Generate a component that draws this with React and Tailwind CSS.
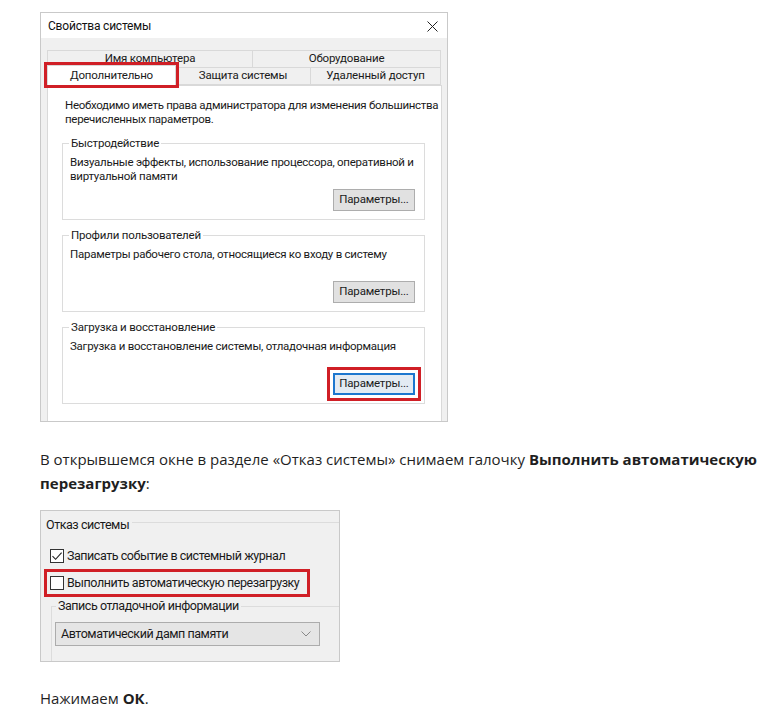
import React from 'react';

// Windows-style dialog pieces, shown as screenshots inside an article
const ui = { fontFamily: 'Roboto, "Liberation Sans", Arial, sans-serif' };
const article = { fontFamily: '"Open Sans", "Noto Sans", sans-serif' };

function WinButton({ focused, children }) {
  return (
    <div
      className={`flex items-center justify-center w-[82px] h-[22px] text-[11.5px] tracking-[-0.2px] text-[#1a1a1a] ${
        focused
          ? 'border-2 border-[#1c77cf] bg-[#e3ebf3] outline-[3px] outline-[#d01f26] outline-offset-[3px]'
          : 'border border-[#adadad] bg-[#e1e1e1]'
      }`}
    >
      {children}
    </div>
  );
}

function GroupBox({ title, text, focused, className = '' }) {
  return (
    <div className={`border border-[#dcdcdc] ml-[14px] mr-[16px] pb-[8px] ${className}`}>
      <div className="-mt-[8px] ml-[6px] px-[2px] w-fit bg-white leading-[14px] text-[11.5px] tracking-[-0.2px] text-[#1a1a1a]">
        {title}
      </div>
      <div className="h-[28px] mt-[5px] pl-[7px] leading-[14px] text-[11.5px] tracking-[-0.25px] text-[#1a1a1a]">
        {text}
      </div>
      <div className="flex justify-end mt-[6px] mr-[9px]">
        <WinButton focused={focused}>Параметры...</WinButton>
      </div>
    </div>
  );
}

function Tab({ w, children, selected }) {
  if (selected) {
    return (
      <div
        className={`${w} h-[20px] -mt-[2px] -mb-px relative z-10 flex items-center justify-center bg-white border border-b-0 border-[#d9d9d9] outline-[3px] outline-[#d01f26] text-[11.5px] tracking-[-0.2px] text-[#1a1a1a]`}
      >
        {children}
      </div>
    );
  }
  return (
    <div
      className={`${w} h-[18px] flex items-center justify-center bg-[#f0f0f0] border border-[#d9d9d9] -ml-px first:ml-0 text-[11.5px] tracking-[-0.2px] text-[#1a1a1a]`}
    >
      {children}
    </div>
  );
}

function SystemProperties() {
  return (
    <div className="w-[408px] h-[410px] border border-[#c9c9c9] bg-[#f0f0f0] overflow-hidden" style={ui}>
      <div className="h-[25px] bg-white flex items-center justify-between pl-[7px] pr-[9px]">
        <span className="text-[12px] tracking-[-0.2px] text-[#111]">Свойства системы</span>
        <svg width="11" height="11" viewBox="0 0 11 11" className="mt-[1px]">
          <path d="M0.5 0.5 L10.5 10.5 M10.5 0.5 L0.5 10.5" stroke="#222" strokeWidth="1" />
        </svg>
      </div>
      <div className="pl-[6px] pr-[6px] pt-[12px]">
        <div className="flex">
          <Tab w="w-[206px]">Имя компьютера</Tab>
          <Tab w="w-[189px]">Оборудование</Tab>
        </div>
        <div className="flex -mt-px">
          <Tab w="w-[129px]" selected>Дополнительно</Tab>
          <Tab w="w-[136px]">Защита системы</Tab>
          <Tab w="w-[131px]">Удаленный доступ</Tab>
        </div>
        <div className="w-[395px] h-[340px] bg-white border border-[#d9d9d9]">
          <div className="pl-[17px] pt-[12px] whitespace-nowrap leading-[14px] text-[11.5px] tracking-[-0.3px] text-[#1a1a1a]">
            Необходимо иметь права администратора для изменения большинства
            <br />
            перечисленных параметров.
          </div>
          <GroupBox
            className="mt-[17px]"
            title="Быстродействие"
            text="Визуальные эффекты, использование процессора, оперативной и виртуальной памяти"
          />
          <GroupBox
            className="mt-[15px]"
            title="Профили пользователей"
            text="Параметры рабочего стола, относящиеся ко входу в систему"
          />
          <GroupBox
            className="mt-[15px]"
            title="Загрузка и восстановление"
            text="Загрузка и восстановление системы, отладочная информация"
            focused
          />
        </div>
      </div>
    </div>
  );
}

function CheckRow({ checked, highlight, children }) {
  return (
    <div
      className={`flex items-center gap-[3px] w-fit ${
        highlight ? 'outline-[3px] outline-[#d01f26] outline-offset-[3px] pr-[5px]' : ''
      }`}
    >
      <div className="w-[14px] h-[14px] border border-[#333] bg-white flex items-center justify-center">
        {checked && (
          <svg width="12" height="12" viewBox="0 0 12 12">
            <path d="M1.5 6.2 L4.6 9.3 L10.6 2.6" fill="none" stroke="#222" strokeWidth="1.1" />
          </svg>
        )}
      </div>
      <span className="text-[12.5px] tracking-[-0.45px] leading-[16px] text-[#1a1a1a]">{children}</span>
    </div>
  );
}

function FailureBox() {
  return (
    <div className="w-[300px] h-[152px] border border-[#c9c9c9] bg-[#f0f0f0] overflow-hidden" style={ui}>
      <div className="flex items-center mt-[6px] pl-[5px]">
        <span className="text-[12.5px] tracking-[-0.45px] leading-[16px] text-[#1a1a1a] pr-[3px]">Отказ системы</span>
        <div className="flex-1 h-px bg-[#dcdcdc] -mt-[6px]" />
      </div>
      <div className="pl-[9px] mt-[15px] flex flex-col gap-[11px]">
        <CheckRow checked>Записать событие в системный журнал</CheckRow>
        <CheckRow highlight>Выполнить автоматическую перезагрузку</CheckRow>
      </div>
      <div className="ml-[10px] mt-[15px] border-l border-t border-[#dcdcdc] h-[60px]">
        <div className="-mt-[9px] ml-[4px] px-[2px] w-fit bg-[#f0f0f0] text-[12.5px] tracking-[-0.45px] leading-[16px] text-[#1a1a1a]">
          Запись отладочной информации
        </div>
        <div className="ml-[3px] mt-[8px] w-[265px] h-[24px] border border-[#acacac] bg-[#e5e5e5] flex items-center justify-between pl-[5px] pr-[8px]">
          <span className="text-[12.5px] tracking-[-0.45px] text-[#1a1a1a]">Автоматический дамп памяти</span>
          <svg width="10" height="6" viewBox="0 0 10 6">
            <path d="M0.5 0.5 L5 5 L9.5 0.5" fill="none" stroke="#888" strokeWidth="1" />
          </svg>
        </div>
      </div>
    </div>
  );
}

export default function App() {
  return (
    <div className="w-[768px] h-[710px] bg-white pl-[40px] pt-[12px] overflow-hidden text-[#1f1f1f]" style={article}>
      <SystemProperties />
      <p className="mt-[25px] text-[15px] leading-[24px]">
        В открывшемся окне в разделе «Отказ системы» снимаем галочку{' '}
        <b className="font-bold">Выполнить автоматическую</b>
        <br />
        <b className="font-bold">перезагрузку</b>:
      </p>
      <div className="mt-[15px]">
        <FailureBox />
      </div>
      <p className="mt-[24px] text-[15px] leading-[24px]">
        Нажимаем <b className="font-bold">ОК</b>.
      </p>
    </div>
  );
}
